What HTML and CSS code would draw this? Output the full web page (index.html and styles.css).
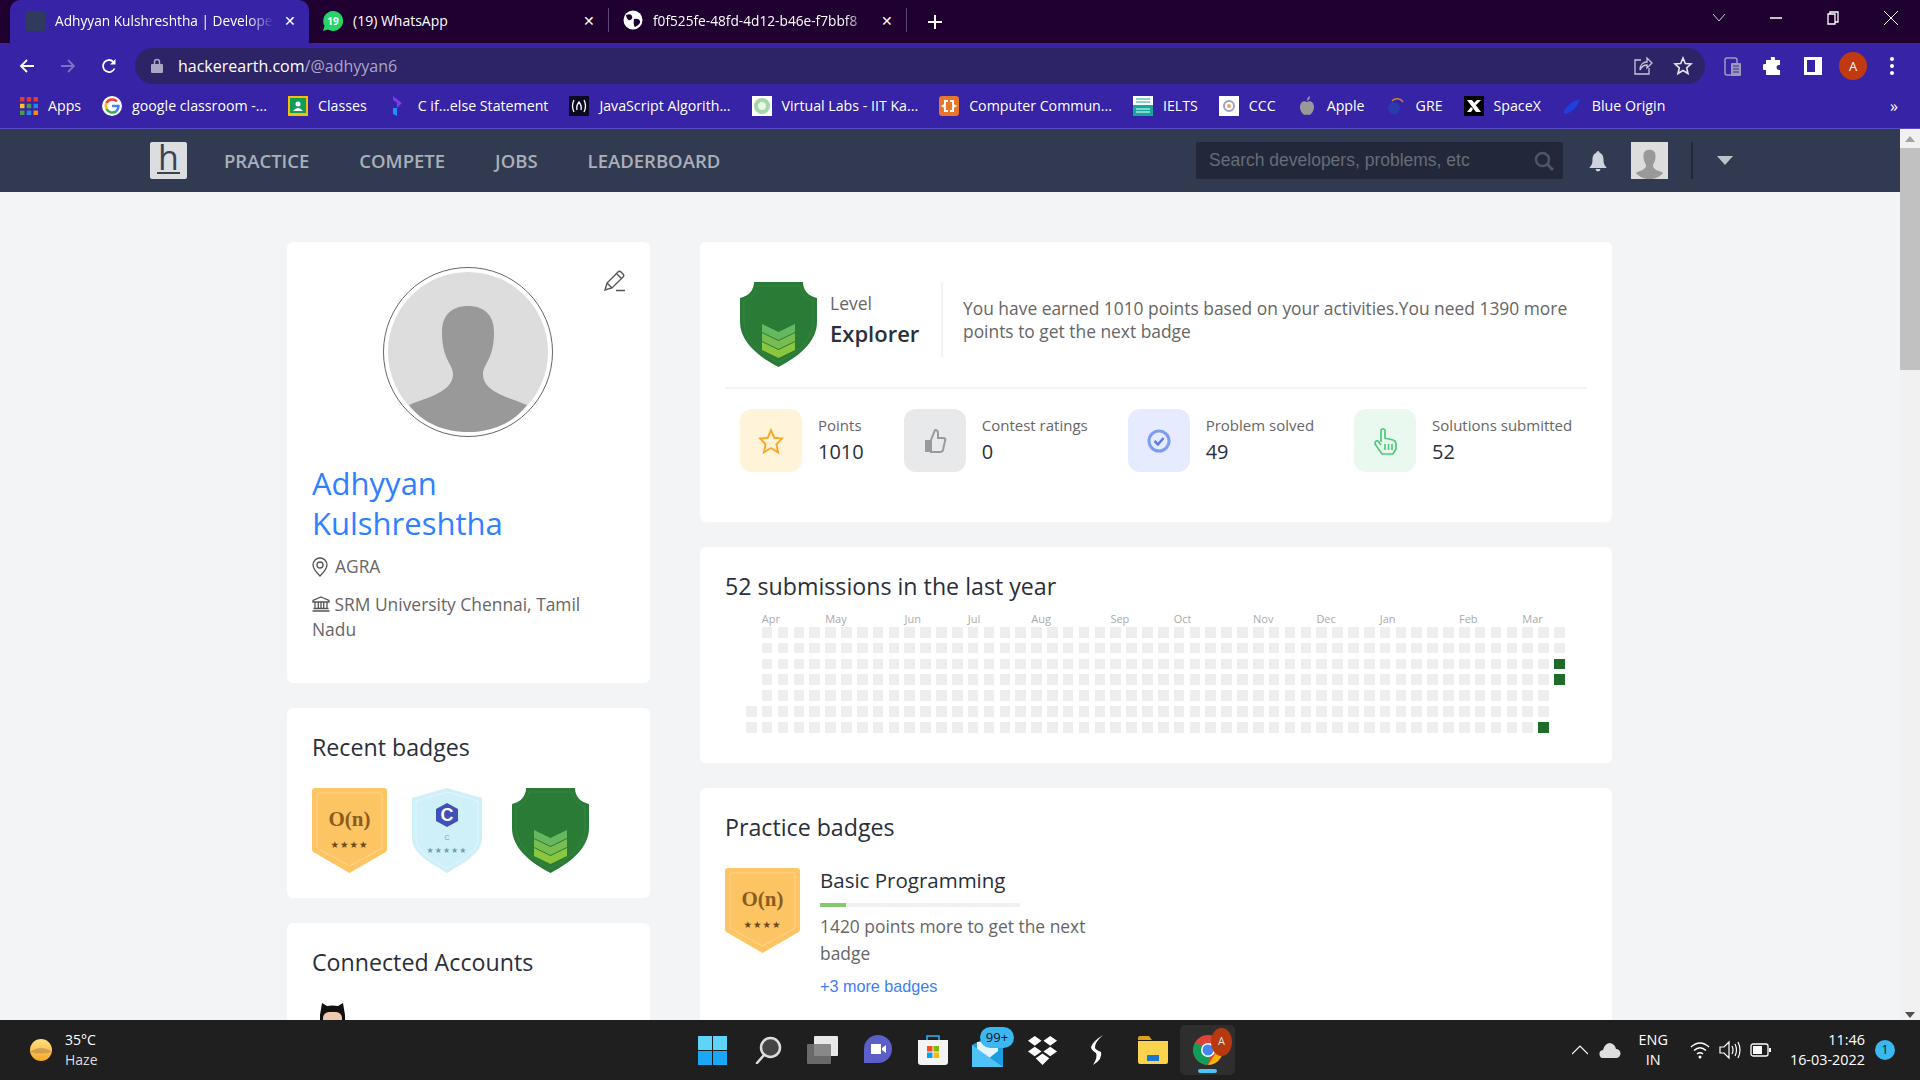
FILE: index.html
```html
<!DOCTYPE html>
<html lang="en">
<head>
    <meta charset="UTF-8">
    <title>Adhyyan Kulshreshtha | Developer Profile</title>
    <link rel="stylesheet" href="styles.css">
</head>
<body>
    <svg class="defs" width="0" height="0">
        <symbol id="person" viewBox="-80 -80 160 160">
            <path fill="#999" d="M-59 53C-40 45-15 40-15 22C-15 12-26 8-26-20C-26-38-15-46 0-46C15-46 26-38 26-20C26 8 15 12 15 22C15 40 40 45 59 53C45 72 22 80 0 80C-22 80-45 72-59 53Z"/>
        </symbol>
        <symbol id="shield" viewBox="0 0 77 85">
            <path fill="#2a7b35" d="M14 0H63C63 8 68 14 77 16V40C77 60 58 75 38.500 85C19 75 0 60 0 40V16C9 14 14 8 14 0Z"/>
            <path fill="none" stroke="#3a8a4a" stroke-width=".7" d="M17 4H60C61 11 66 17 73 19V40C73 58 56 72 38.500 80C21 72 4 58 4 40V19C11 17 16 11 17 4Z"/>
            <path fill="#66b860" d="M22 42L38.500 50L55 42V50L38.500 58L22 50Z"/>
            <path fill="#78bd52" d="M22 51L38.500 59L55 51V59L38.500 67L22 59Z"/>
            <path fill="#8cc63f" d="M22 60L38.500 68L55 60V68L38.500 76L22 68Z"/>
        </symbol>
        <symbol id="badge-on-shape" viewBox="0 0 75 85">
            <path fill="#fdc463" d="M3 0H72Q75 0 75 3V61Q75 64 72 65L37.500 85L3 65Q0 64 0 61V3Q0 0 3 0Z"/>
            <path fill="none" stroke="#ffd99a" stroke-width=".8" d="M7 5H68Q70 5 70 7V60L37.500 78L5 60V7Q5 5 7 5Z"/>
        </symbol>
    </svg>

    <div class="tabstrip">
        <div class="tab tab-active">
            <span class="tab-favicon"></span>
            <span class="tab-title tab-fade">Adhyyan Kulshreshtha | Develope</span>
            <span class="tab-close">✕</span>
        </div>
        <div class="tab">
            <svg class="tab-icon" viewBox="0 0 20 20"><path fill="#25d366" d="M10 0a10 10 0 0 0-8.500 15L0 20l5-1.400A10 10 0 1 0 10 0Z"/><text x="10" y="14" class="wa-text">19</text></svg>
            <span class="tab-title">(19) WhatsApp</span>
            <span class="tab-close">✕</span>
        </div>
        <div class="tab tab-sep">
            <svg class="tab-icon" viewBox="0 0 20 20"><circle cx="10" cy="10" r="9.500" fill="#fff"/><path fill="#1f0030" d="M3 5q5-2 6 1t-2 4-4-5ZM11 9q5-1 6 2t-5 6q-2-2-1-8Z"/></svg>
            <span class="tab-title tab-fade">f0f525fe-48fd-4d12-b46e-f7bbf8</span>
            <span class="tab-close">✕</span>
        </div>
        <div class="tab-plus">
            <svg viewBox="0 0 14 14" width="14" height="14"><path stroke="#fff" stroke-width="2" d="M7 0V14M0 7H14"/></svg>
        </div>
        <div class="window-btns">
            <svg viewBox="0 0 12 8" width="12" height="8"><path fill="none" stroke="#ccc" d="M0 0L6 7L12 0"/></svg>
            <svg viewBox="0 0 12 2" width="12" height="2"><path stroke="#fff" stroke-width="1.500" d="M0 1H12"/></svg>
            <svg viewBox="0 0 12 14" width="12" height="14"><path fill="none" stroke="#fff" stroke-width="1.300" d="M1 3H8V13H1ZM3 3V1H11V11H8"/></svg>
            <svg viewBox="0 0 14 14" width="14" height="14"><path stroke="#fff" d="M0 0L14 14M14 0L0 14"/></svg>
        </div>
    </div>

    <div class="toolbar">
        <div class="nav-arrows">
            <svg viewBox="0 0 16 16" width="16" height="16"><path fill="none" stroke="#fff" stroke-width="1.800" d="M15 8H2M8 2L2 8L8 14"/></svg>
            <svg viewBox="0 0 16 16" width="16" height="16"><path fill="none" stroke="#7c70c6" stroke-width="1.800" d="M1 8H14M8 2L14 8L8 14"/></svg>
            <svg viewBox="0 0 16 16" width="16" height="16"><path fill="none" stroke="#fff" stroke-width="1.800" d="M13.500 10.500A6 6 0 1 1 12.500 4"/><path fill="#fff" d="M14.500 1V6.500H9Z"/></svg>
        </div>
        <div class="omnibox">
            <svg class="lock" viewBox="0 0 12 15" width="12" height="15"><path fill="none" stroke="#a9a6c6" stroke-width="1.500" d="M3.500 6V4a2.500 2.500 0 0 1 5 0V6"/><rect y="6" width="12" height="9" rx="1" fill="#a9a6c6" x="0"/></svg>
            <span class="url">hackerearth.com<span class="url-path">/@adhyyan6</span></span>
            <div class="omni-actions">
                <svg viewBox="0 0 20 20" width="20" height="20"><path fill="none" stroke="#c8c6dc" stroke-width="1.300" d="M8 4H2V18H16V12M7 14C7 9 10 6 14 6V2L19 7L14 12V9C11 9 9 10 7 14Z"/></svg>
                <svg viewBox="0 0 20 20" width="20" height="20"><path fill="none" stroke="#e6e4f0" stroke-width="1.600" d="M10 2L12.300 7.500L18 8L13.700 11.800L15 17.500L10 14.500L5 17.500L6.300 11.800L2 8L7.700 7.500Z"/></svg>
            </div>
        </div>
        <div class="toolbar-ext">
            <svg viewBox="0 0 18 22" width="18" height="22"><rect x="1" y="3" width="12" height="17" rx="2" fill="none" stroke="#9e9ab8" stroke-width="1.500"/><rect x="7" y="8" width="10" height="13" rx="1" fill="#9e9ab8"/><path stroke="#3623a5" d="M9 11H15M9 14H15M9 17H15"/></svg>
            <svg viewBox="0 0 20 20" width="20" height="20"><path fill="#fff" d="M8 1h3a1.500 1.500 0 0 1 1 2v1h5v5h-1a2.500 2.500 0 0 0 0 5h1v5H3v-5H2a3 3 0 0 1 0-6h1V4h5V3Q7.500 1.500 8 1Z"/></svg>
            <svg viewBox="0 0 18 18" width="18" height="18"><rect width="18" height="18" fill="#fff"/><rect x="3" y="3" width="8" height="12" fill="#3623a5"/></svg>
            <span class="chrome-avatar">A</span>
            <svg class="chrome-menu" viewBox="0 0 4 18" width="4" height="18"><circle cx="2" cy="2" r="2" fill="#fff"/><circle cx="2" cy="9" r="2" fill="#fff"/><circle cx="2" cy="16" r="2" fill="#fff"/></svg>
        </div>
    </div>

    <div class="bookmarks">
        <div class="bm"><svg class="bm-icon bm-apps" viewBox="0 0 16 16"><path fill="#e53935" d="M0 0h4v4H0zM6 0h4v4H6zM12 0h4v4h-4z"/><path fill="#fbc02d" d="M0 6h4v4H0z"/><path fill="#43a047" d="M6 6h4v4H6zM0 12h4v4H0z"/><path fill="#1e88e5" d="M12 6h4v4h-4zM6 12h4v4H6z"/><path fill="#fb8c00" d="M12 12h4v4h-4z"/></svg>Apps</div>
        <div class="bm"><svg class="bm-icon" viewBox="0 0 20 20"><circle cx="10" cy="10" r="10" fill="#fff"/><path fill="none" stroke="#ea4335" stroke-width="2.500" d="M15 5.500A6.500 6.500 0 0 0 4.500 7"/><path fill="none" stroke="#fbbc05" stroke-width="2.500" d="M4.500 7a6.500 6.500 0 0 0 0 6"/><path fill="none" stroke="#34a853" stroke-width="2.500" d="M4.500 13a6.500 6.500 0 0 0 10 2"/><path fill="none" stroke="#4285f4" stroke-width="2.500" d="M14.500 15A6.500 6.500 0 0 0 16.500 10H10"/></svg>google classroom -...</div>
        <div class="bm"><svg class="bm-icon" viewBox="0 0 20 20"><rect width="20" height="20" fill="#fbbc04"/><rect x="2" y="2" width="16" height="15" fill="#0f9d58"/><circle cx="10" cy="8" r="2.500" fill="#fff"/><path fill="#fff" d="M5 15q5-6 10 0Z"/></svg>Classes</div>
        <div class="bm"><svg class="bm-icon" viewBox="0 0 20 20"><path fill="#7c3aed" d="M5 0L14 7L9 12V7L5 4Z"/><path fill="#1e90ff" d="M5 12L9 12V20L5 18Z"/></svg>C if...else Statement</div>
        <div class="bm"><svg class="bm-icon" viewBox="0 0 20 20"><rect width="20" height="20" fill="#0a0a23"/><path fill="none" stroke="#fff" stroke-width="1.300" d="M5 4Q2 10 5 16M15 4Q18 10 15 16M8 14Q7 10 10 6Q13 10 12 14"/></svg>JavaScript Algorith...</div>
        <div class="bm"><svg class="bm-icon" viewBox="0 0 20 20"><rect width="20" height="20" fill="#fff"/><circle cx="10" cy="10" r="8" fill="#a5d6a7"/><circle cx="10" cy="10" r="4" fill="#e8f5e9"/></svg>Virtual Labs - IIT Ka...</div>
        <div class="bm"><svg class="bm-icon" viewBox="0 0 20 20"><rect width="20" height="20" rx="3" fill="#e8762b"/><path fill="none" stroke="#fff" stroke-width="2" d="M9 5H6V9L4 10L6 11V15H9M11 5H14V9L16 10L14 11V15H11"/></svg>Computer Commun...</div>
        <div class="bm"><svg class="bm-icon" viewBox="0 0 20 20"><rect width="20" height="20" fill="#14a89c"/><rect width="20" height="9" fill="#fff"/><path stroke="#14a89c" d="M3 3H17M3 6H17"/><path stroke="#fff" d="M3 13H17M3 16H17"/></svg>IELTS</div>
        <div class="bm"><svg class="bm-icon" viewBox="0 0 20 20"><rect width="20" height="20" fill="#fff"/><circle cx="10" cy="10" r="5" fill="none" stroke="#a0a0c0" stroke-width="2"/><circle cx="10" cy="10" r="2" fill="#e0b050"/></svg>CCC</div>
        <div class="bm"><svg class="bm-icon" viewBox="0 0 20 20"><path fill="#999" d="M10 6C7 4 3 6 3 11C3 15 6 19 8 19Q10 18 12 19C14 19 17 15 17 11C17 6 13 4 10 6ZM10 5Q10 1 13 0Q13 4 10 5Z"/></svg>Apple</div>
        <div class="bm"><svg class="bm-icon" viewBox="0 0 20 20"><path fill="none" stroke="#d08030" stroke-width="1.500" d="M6 5A7 7 0 0 1 17 6"/><circle cx="8" cy="12" r="6" fill="#2a3caa"/></svg>GRE</div>
        <div class="bm"><svg class="bm-icon" viewBox="0 0 20 20"><rect width="20" height="20" fill="#000"/><path fill="#fff" d="M3 4H8L17 16H12ZM17 4L12 9L10 7L13 4ZM3 16L7 11L9 13L7 16Z"/></svg>SpaceX</div>
        <div class="bm"><svg class="bm-icon" viewBox="0 0 20 20"><path fill="#1e40e0" d="M1 17Q6 6 18 3Q15 14 4 18Z"/></svg>Blue Origin</div>
        <span class="bm-more">»</span>
    </div>

    <div class="viewport">
        <div class="page">
            <header class="site-nav">
                <div class="site-logo">
                    <span class="site-logo-h">h</span>
                </div>
                <nav class="site-links">
                    <a>PRACTICE</a>
                    <a>COMPETE</a>
                    <a>JOBS</a>
                    <a>LEADERBOARD</a>
                </nav>
                <div class="site-search">
                    <span>Search developers, problems, etc</span>
                    <svg viewBox="0 0 20 20" width="20" height="20"><circle cx="8.500" cy="8.500" r="6.500" fill="none" stroke="#4d5666" stroke-width="2.500"/><path stroke="#4d5666" stroke-width="3" d="M13 13L19 19"/></svg>
                </div>
                <svg class="site-bell" viewBox="0 0 18 22" width="18" height="22"><path fill="#cfd3dc" d="M9 1a1.500 1.500 0 0 1 1.500 1.500C14 4 14.500 7 14.500 10C14.500 14 16 16 17.500 17.500V18H.5V17.500C2 16 3.500 14 3.500 10C3.500 7 4 4 7.500 2.500A1.500 1.500 0 0 1 9 1Z"/><path fill="#cfd3dc" d="M6.500 19H11.500A2.500 2.500 0 0 1 6.500 19Z"/></svg>
                <svg class="site-avatar" viewBox="-80 -80 160 160"><rect x="-80" y="-80" width="160" height="160" fill="#ddd"/><use href="#person" x="-80" y="-80" width="160" height="160"/></svg>
                <span class="site-divider"></span>
                <span class="site-caret"></span>
            </header>

            <main class="content">
                <div class="col-left">
                    <section class="card profile-card">
                        <svg class="edit-icon" viewBox="0 0 22 22" width="22" height="22"><path fill="none" stroke="#555" stroke-width="1.400" d="M1 20L3 13L14 2Q15.500 .5 17 2L19 4Q20.500 5.500 19 7L8 18L1 20ZM3 13L8 18M12.500 3.500L17.500 8.500M12 20.500H21"/></svg>
                        <div class="avatar-ring">
                            <svg viewBox="-80 -80 160 160" class="avatar-img"><circle r="80" fill="#ddd"/><use href="#person" x="-80" y="-80" width="160" height="160"/></svg>
                        </div>
                        <h1 class="profile-name">Adhyyan Kulshreshtha</h1>
                        <div class="profile-line">
                            <svg viewBox="0 0 16 20" width="16" height="20"><path fill="none" stroke="#555" stroke-width="1.300" d="M8 1A7 7 0 0 0 1 8C1 12 5 16 8 19C11 16 15 12 15 8A7 7 0 0 0 8 1Z"/><circle cx="8" cy="8" r="3" fill="none" stroke="#555" stroke-width="1.300"/></svg>
                            AGRA
                        </div>
                        <div class="profile-school">
                            <svg viewBox="0 0 18 16" width="18" height="16"><path fill="none" stroke="#555" stroke-width="1.300" d="M9 1L17 4.500V6H1V4.500ZM3 6V12M6.300 6V12M9 6V12M11.700 6V12M15 6V12M1.500 12.500H16.500M.5 15H17.500"/></svg>
                            SRM University Chennai, Tamil Nadu
                        </div>
                    </section>

                    <section class="card">
                        <h2 class="card-title">Recent badges</h2>
                        <div class="badge-row">
                            <svg class="badge-on" viewBox="0 0 75 85">
                                <use href="#badge-on-shape"/>
                                <text x="37.500" y="38" class="on-text">O(n)</text>
                                <text x="37.500" y="60" class="on-stars">★★★★</text>
                            </svg>
                            <svg class="badge-c" viewBox="0 0 70 85">
                                <path fill="#d0f0f9" d="M35 0L70 10V50C70 66 50 76 35 85C20 76 0 66 0 50V10Z"/>
                                <path fill="none" stroke="#e6f8fd" stroke-width=".8" d="M35 4L66 13V50C66 64 48 73 35 80C22 73 4 64 4 50V13Z"/>
                                <path fill="#3f51b5" d="M35 15L46 21V33L35 39L24 33V21Z"/>
                                <text x="35" y="33" class="c-text">C</text>
                                <text x="35" y="52" class="c-small">C</text>
                                <text x="35" y="65" class="c-stars">★★★★★</text>
                            </svg>
                            <svg class="badge-shield"><use href="#shield"/></svg>
                        </div>
                    </section>

                    <section class="card">
                        <h2 class="card-title">Connected Accounts</h2>
                        <div class="badge-row">
                            <svg class="octocat" viewBox="0 0 25 30" width="25" height="30"><path fill="#111" d="M2 0L7 3Q12 2 18 3L23 0L25 12V30H0V12Z"/><rect x="3" y="9" width="19" height="18" rx="6" fill="#f0c8b0"/></svg>
                        </div>
                    </section>
                </div>

                <div class="col-right">
                    <section class="card level-card">
                        <div class="level-row">
                            <svg class="level-shield"><use href="#shield"/></svg>
                            <div class="level-name">
                                <span class="level-label">Level</span>
                                <span class="level-value">Explorer</span>
                            </div>
                            <p class="level-desc">You have earned 1010 points based on your activities.You need 1390 more points to get the next badge</p>
                        </div>
                        <div class="stat-row">
                            <div class="stat">
                                <div class="stat-box stat-yellow"><svg viewBox="0 0 24 24" width="26" height="26"><path fill="none" stroke="#f9a825" stroke-width="1.800" d="M12 2L15 9L22 9.800L17 15L18.500 22.500L12 18.500L5.500 22.500L7 15L2 9.800L9 9Z"/></svg></div>
                                <div><div class="stat-label">Points</div><div class="stat-value">1010</div></div>
                            </div>
                            <div class="stat">
                                <div class="stat-box stat-gray"><svg viewBox="0 0 24 26" width="24" height="26"><path fill="none" stroke="#9a9a9a" stroke-width="2" d="M8 12L12 2Q15 2 15 5V10H21Q23 11 22 13L20 22Q19.500 24 17 24H8Z"/><rect x="2" y="12" width="6" height="12" fill="#9a9a9a"/></svg></div>
                                <div><div class="stat-label">Contest ratings</div><div class="stat-value">0</div></div>
                            </div>
                            <div class="stat">
                                <div class="stat-box stat-blue"><svg viewBox="0 0 24 24" width="24" height="24"><circle cx="12" cy="12" r="10" fill="none" stroke="#7f9cf5" stroke-width="3"/><path fill="none" stroke="#5a7be8" stroke-width="2.500" d="M7.500 12L11 15.500L16.500 9"/></svg></div>
                                <div><div class="stat-label">Problem solved</div><div class="stat-value">49</div></div>
                            </div>
                            <div class="stat">
                                <div class="stat-box stat-green"><svg viewBox="0 0 24 28" width="24" height="28"><path fill="none" stroke="#4ccb78" stroke-width="1.700" d="M8 15V3Q10 .5 12 3V11L20 13Q23 14 23 17V22L20 27H9L2 17Q2 13 5 14L8 18M12 17V23M15.500 17V23M19 17V23"/></svg></div>
                                <div><div class="stat-label">Solutions submitted</div><div class="stat-value">52</div></div>
                            </div>
                        </div>
                    </section>

                    <section class="card">
                        <h2 class="card-title">52 submissions in the last year</h2>
                        <div class="cal-months" id="calMonths"></div>
                        <div class="cal-grid" id="calGrid"></div>
                    </section>

                    <section class="card practice-card">
                        <h2 class="card-title">Practice badges</h2>
                        <div class="practice-row">
                            <svg class="badge-on" viewBox="0 0 75 85">
                                <use href="#badge-on-shape"/>
                                <text x="37.500" y="38" class="on-text">O(n)</text>
                                <text x="37.500" y="60" class="on-stars">★★★★</text>
                            </svg>
                            <div class="practice-info">
                                <div class="practice-name">Basic Programming</div>
                                <div class="practice-bar"><div class="practice-fill"></div></div>
                                <p class="practice-text">1420 points more to get the next badge</p>
                                <a class="practice-more">+3 more badges</a>
                            </div>
                        </div>
                    </section>
                </div>
            </main>
        </div>
        <div class="scrollbar">
            <span class="scroll-up"></span>
            <div class="scroll-thumb"></div>
            <span class="scroll-down"></span>
        </div>
    </div>

    <footer class="taskbar">
        <div class="weather">
            <svg viewBox="0 0 24 24" width="24" height="24"><defs><linearGradient id="sun" x1="0" y1="0" x2="0" y2="1"><stop offset="0" stop-color="#ffe082"/><stop offset="1" stop-color="#f9a825"/></linearGradient></defs><circle cx="12" cy="12" r="11" fill="url(#sun)"/><path fill="#b08a50" opacity=".6" d="M1 14Q12 6 23 14Q12 17 1 14Z"/></svg>
            <div><div>35°C</div><div class="weather-sub">Haze</div></div>
        </div>
        <div class="task-icons">
            <span class="task-slot"><svg viewBox="0 0 29 29" width="29" height="29"><path fill="#5fd4fb" d="M0 0H14V14H0ZM15 0H29V14H15Z"/><path fill="#1aa7f5" d="M0 15H14V29H0ZM15 15H29V29H15Z"/></svg></span>
            <span class="task-slot"><svg viewBox="0 0 28 28" width="28" height="28"><circle cx="16.500" cy="11.500" r="9.500" fill="#444" stroke="#ddd" stroke-width="2.500"/><path stroke="#ddd" stroke-width="2.500" stroke-linecap="round" d="M10 19L3 27"/></svg></span>
            <span class="task-slot"><svg viewBox="0 0 32 28" width="32" height="28"><rect x="7" y="0" width="24" height="20" rx="1" fill="#e8e8e8"/><rect y="8" width="24" height="20" rx="1" fill="#777" opacity=".85"/></svg></span>
            <span class="task-slot"><svg viewBox="0 0 28 30" width="28" height="30"><path fill="#5b5fc7" d="M14 0A14 14 0 0 1 28 14A14 14 0 0 1 14 28H0V14A14 14 0 0 1 14 0Z"/><path fill="#fff" d="M7 9H17V19H7ZM18 13L22 10V18L18 15Z"/></svg></span>
            <span class="task-slot"><svg viewBox="0 0 30 30" width="30" height="30"><path fill="none" stroke="#29b6f6" stroke-width="1.500" d="M9 6V1H21V6"/><path fill="#f4f4f4" d="M0 5H30V27Q30 30 27 30H3Q0 30 0 27Z"/><path fill="#f25022" d="M9 11H14.500V16.500H9Z"/><path fill="#7fba00" d="M15.500 11H21V16.500H15.500Z"/><path fill="#00a4ef" d="M9 17.500H14.500V23H9Z"/><path fill="#ffb900" d="M15.500 17.500H21V23H15.500Z"/></svg></span>
            <span class="task-slot task-mail">
                <svg viewBox="0 0 31 30" width="31" height="30"><path fill="#1b9de2" d="M0 8L15 0L31 8V30H0Z"/><path fill="#e6f4fb" d="M5 5H26V14L16 22L5 14Z"/><path fill="#4fc3f7" d="M0 8L31 30H0Z"/></svg>
                <span class="mail-count">99+</span>
            </span>
            <span class="task-slot"><svg viewBox="0 0 32 32" width="31" height="31"><path fill="#fff" d="M8 1L15 6L8 11L1 6ZM24 1L31 6L24 11L17 6ZM8 12L15 17L8 22L1 17ZM24 12L31 17L24 22L17 17ZM16 19L23 24L16 31L9 24Z"/></svg></span>
            <span class="task-slot"><svg viewBox="0 0 14 30" width="14" height="30"><path fill="#fff" d="M12 0Q3 8 4 13Q5 15 10 17Q12 24 2 30Q7 22 5 18Q0 15 0 12Q2 6 12 0Z"/></svg></span>
            <span class="task-slot"><svg viewBox="0 0 30 28" width="30" height="28"><path fill="#dca11c" d="M0 2Q0 0 2 0H11L14 4H0Z"/><path fill="#fcd34d" d="M0 5H30V26Q30 28 28 28H2Q0 28 0 26Z"/><path fill="#1976d2" d="M9 19H21V25H9Z"/></svg></span>
            <span class="task-slot task-active">
                <svg viewBox="0 0 30 30" width="30" height="30"><circle cx="15" cy="15" r="15" fill="#db4437"/><path fill="#0f9d58" d="M2 8A15 15 0 0 0 15 30L18 14Z"/><path fill="#f4b400" d="M15 30A15 15 0 0 0 28 8H15L22 19Z"/><circle cx="15" cy="15" r="7" fill="#fff"/><circle cx="15" cy="15" r="5.500" fill="#4285f4"/></svg>
                <span class="task-avatar">A</span>
                <span class="task-line"></span>
            </span>
        </div>
        <div class="tray">
            <svg viewBox="0 0 16 10" width="16" height="10"><path fill="none" stroke="#fff" stroke-width="1.200" d="M0 9L8 1L16 9"/></svg>
            <svg viewBox="0 0 22 16" width="22" height="16"><path fill="#ddd" d="M5 16A4 4 0 0 1 4 8Q6 1 11 1Q16 2 17 7A4.500 4.500 0 0 1 17 16Z"/></svg>
            <div class="tray-lang"><div>ENG</div><div>IN</div></div>
            <div class="tray-status">
                <svg viewBox="0 0 20 18" width="20" height="18"><path fill="none" stroke="#fff" stroke-width="1.500" d="M1 6Q10-2 19 6M4 9.500Q10 4 16 9.500M7 13Q10 10.500 13 13"/><circle cx="10" cy="16" r="1.500" fill="#fff"/></svg>
                <svg viewBox="0 0 22 20" width="22" height="20"><path fill="none" stroke="#fff" stroke-width="1.200" d="M1 7H5L10 2V18L5 13H1ZM13 6Q15 10 13 14M16 4Q19 10 16 16M19 2Q23 10 19 18"/></svg>
                <svg viewBox="0 0 21 14" width="21" height="14"><rect x="1" y="1" width="17" height="12" rx="2" fill="none" stroke="#fff" stroke-width="1.300"/><rect x="3" y="3" width="9" height="8" fill="#fff"/><rect x="19" y="5" width="2" height="4" fill="#fff"/></svg>
            </div>
            <div class="tray-clock"><div>11:46</div><div>16-03-2022</div></div>
            <span class="tray-count">1</span>
        </div>
    </footer>

    <script>
        var months = [['Apr', 1], ['May', 5], ['Jun', 10], ['Jul', 14], ['Aug', 18], ['Sep', 23], ['Oct', 27], ['Nov', 32], ['Dec', 36], ['Jan', 40], ['Feb', 45], ['Mar', 49]];
        var monthRow = document.getElementById('calMonths');
        months.forEach(function (m) {
            var label = document.createElement('span');
            label.textContent = m[0];
            label.style.gridColumn = (m[1] + 1) + ' / span 3';
            monthRow.appendChild(label);
        });

        var active = { '50-6': true, '51-2': true, '51-3': true };
        var grid = document.getElementById('calGrid');
        for (var col = 0; col < 52; col++) {
            for (var row = 0; row < 7; row++) {
                var cell = document.createElement('i');
                var hidden = (col === 0 && row < 5) || (col === 51 && row > 3);
                cell.className = hidden ? 'cell-empty' : (active[col + '-' + row] ? 'cell-on' : '');
                grid.appendChild(cell);
            }
        }
    </script>
</body>
</html>
```

FILE: styles.css
```css
* { box-sizing: border-box; }
body {
    margin: 0;
    height: 1080px;
    display: flex;
    flex-direction: column;
    overflow: hidden;
    font-family: "Open Sans", sans-serif;
    background: #f3f4f6;
}
h1, h2, p { margin: 0; }
.defs { position: absolute; }

/* browser chrome */
.tabstrip {
    height: 43px;
    background: #1f0030;
    display: flex;
    align-items: flex-end;
    padding-left: 10px;
    color: #fff;
    font-size: 14px;
}
.tab {
    width: 299px;
    height: 43px;
    display: flex;
    align-items: center;
    padding: 0 13px 2px 14px;
    gap: 10px;
}
.tab-active {
    background: #3623a5;
    border-radius: 10px 10px 0 0;
    padding-left: 15px;
}
.tab-sep { border-left: 1px solid #5a4a70; border-right: 1px solid #5a4a70; height: 24px; padding-bottom: 0; margin-bottom: 11px; }
.tab-favicon { width: 20px; height: 20px; background: #2f3a5c; border-radius: 2px; flex: none; }
.tab-icon { width: 20px; height: 20px; flex: none; }
.wa-text { font-size: 10px; font-weight: 700; fill: #fff; text-anchor: middle; }
.tab-title { flex: 1; white-space: nowrap; }
.tab-fade {
    font-size: 13.700px;
    -webkit-mask-image: linear-gradient(to right, #000 88%, transparent 100%);
    mask-image: linear-gradient(to right, #000 88%, transparent 100%);
}
.tab-close { font-size: 14px; flex: none; }
.tab-plus { width: 56px; height: 43px; display: flex; align-items: center; justify-content: center; }
.window-btns {
    margin-left: auto;
    display: flex;
    align-items: center;
    gap: 45px;
    height: 38px;
    margin-bottom: 6px;
    padding-right: 22px;
}

.toolbar {
    height: 45px;
    background: #3623a5;
    display: flex;
    align-items: center;
    padding-left: 19px;
    color: #fff;
}
.nav-arrows { display: flex; gap: 25px; width: 116px; }
.omnibox {
    width: 1570px;
    height: 36px;
    background: #2d2468;
    border-radius: 18px;
    display: flex;
    align-items: center;
    padding: 0 12px 0 16px;
}
.lock { margin-right: 15px; }
.url { font-size: 16px; flex: 1; }
.url-path { color: #a9a6c6; }
.omni-actions { display: flex; gap: 20px; align-items: center; }
.toolbar-ext { display: flex; align-items: center; gap: 21px; margin-left: 19px; }
.chrome-menu { margin-left: 6px; }
.chrome-avatar {
    width: 28px;
    height: 28px;
    border-radius: 50%;
    background: #c0390f;
    font-size: 13px;
    display: flex;
    align-items: center;
    justify-content: center;
    margin: 0 -4px;
}

.bookmarks {
    height: 41px;
    background: #3623a5;
    border-bottom: 1px solid #5a4cc0;
    display: flex;
    align-items: center;
    padding: 0 0 5px 20px;
    gap: 21px;
    color: #fff;
    font-size: 14.200px;
}
.bm { display: flex; align-items: center; gap: 10px; white-space: nowrap; }
.bm-icon { width: 20px; height: 20px; flex: none; }
.bm-apps { width: 18px; height: 18px; }
.bm-more { margin-left: auto; padding-right: 22px; font-size: 16px; }

/* page */
.viewport { flex: 1; min-height: 0; display: flex; }
.page { flex: 1; overflow: hidden; }
.scrollbar {
    width: 20px;
    background: #f1f1f1;
    display: flex;
    flex-direction: column;
    align-items: center;
}
.scroll-up, .scroll-down { width: 0; height: 0; border-left: 5px solid transparent; border-right: 5px solid transparent; }
.scroll-up { border-bottom: 6px solid #a3a3a3; margin: 7px 0 6px; }
.scroll-thumb { width: 100%; height: 222px; background: #c1c1c1; }
.scroll-down { border-top: 6px solid #505050; margin-top: auto; margin-bottom: 2px; }

.site-nav {
    height: 63px;
    background: #323a52;
    display: flex;
    align-items: center;
    padding-left: 150px;
}
.site-logo {
    width: 37px;
    height: 37px;
    background: #dcdde0;
    border-radius: 2px;
    display: flex;
    justify-content: center;
}
.site-logo-h {
    font-size: 34px;
    line-height: 31px;
    color: #3a4256;
    border-bottom: 2px solid #3a4256;
    height: 32px;
    padding: 0 1px;
    font-weight: 500;
}
.site-links { display: flex; gap: 50px; margin-left: 37px; margin-top: -1px; }
.site-links a { color: #aab0ba; font-size: 18.500px; font-weight: 600; }
.site-search {
    margin-left: auto;
    width: 367px;
    height: 37px;
    background: #22283a;
    border-radius: 2px;
    display: flex;
    align-items: center;
    justify-content: space-between;
    padding: 0 9px 0 13px;
    color: #666c78;
    font-family: "Liberation Sans", sans-serif;
    font-size: 17.500px;
}
.site-bell { margin-left: 26px; }
.site-avatar { width: 37px; height: 37px; margin-left: 24px; }
.site-divider { width: 2px; height: 37px; background: #22283a; margin-left: 23px; }
.site-caret {
    width: 0;
    height: 0;
    border-left: 8px solid transparent;
    border-right: 8px solid transparent;
    border-top: 9px solid #bcc2cc;
    margin-left: 24px;
    margin-right: 167px;
}

.content { display: flex; gap: 50px; padding: 50px 0 0 287px; }
.col-left { width: 363px; display: flex; flex-direction: column; gap: 25px; flex: none; }
.col-right { width: 912px; display: flex; flex-direction: column; gap: 25px; flex: none; }
.card {
    background: #fff;
    border-radius: 6px;
    padding: 25px;
    position: relative;
}
.card-title {
    font-size: 23.200px;
    line-height: 30px;
    font-weight: 500;
    color: #2a2f3a;
    margin-top: -1px;
}

.profile-card { height: 441px; }
.edit-icon { position: absolute; top: 28px; left: 317px; }
.avatar-ring {
    width: 170px;
    height: 170px;
    margin: 0 0 26px 71px;
    border: 1.500px solid #666;
    border-radius: 50%;
    padding: 3.500px;
}
.avatar-img { display: block; width: 160px; height: 160px; }
.profile-name {
    font-size: 31px;
    line-height: 40px;
    font-weight: 500;
    color: #2f80ff;
}
.profile-line, .profile-school {
    font-size: 17.400px;
    line-height: 25px;
    color: #666;
}
.profile-line { margin-top: 11px; display: flex; align-items: center; gap: 7px; }
.profile-school { margin-top: 13px; }
.profile-school svg { vertical-align: -1px; }

.badge-row { display: flex; gap: 25px; margin-top: 26px; }
.badge-on { width: 75px; height: 85px; display: block; flex: none; }
.badge-c { width: 70px; height: 85px; display: block; flex: none; }
.badge-shield { width: 77px; height: 85px; display: block; margin-left: 5px; }
.on-text { font-family: "Liberation Serif", serif; font-weight: 700; font-size: 21px; fill: #8a5c1e; text-anchor: middle; }
.on-stars { font-family: "DejaVu Sans", sans-serif; font-size: 9.500px; letter-spacing: 1px; fill: #6b4a1c; text-anchor: middle; }
.c-text { font-family: "Liberation Sans", sans-serif; font-weight: 700; font-size: 18px; fill: #fff; text-anchor: middle; }
.c-small { font-family: "Liberation Sans", sans-serif; font-size: 7px; fill: #7aa0ac; text-anchor: middle; }
.c-stars { font-family: "DejaVu Sans", sans-serif; font-size: 8px; letter-spacing: 1px; fill: #6fa0ac; text-anchor: middle; }
.octocat { display: block; margin-left: 8px; }

.level-card { height: 280px; padding-top: 40px; }
.level-row {
    display: flex;
    padding: 0 0 20px 15px;
    border-bottom: 2px solid #f3f4f6;
    height: 107px;
}
.level-shield { width: 77px; height: 85px; display: block; flex: none; }
.level-name {
    display: flex;
    flex-direction: column;
    width: 113px;
    margin-left: 13px;
    height: 75px;
    border-right: 2px solid #f3f4f6;
    flex: none;
}
.level-label { font-size: 17.500px; line-height: 22px; margin-top: 10px; color: #666; }
.level-value { font-size: 22px; line-height: 30px; margin-top: 4px; font-weight: 600; color: #2a2f3a; }
.level-desc {
    font-size: 17.400px;
    line-height: 23px;
    color: #666;
    margin: 15px 0 0 20px;
}
.stat-row { display: flex; gap: 40px; padding-left: 15px; margin-top: 20px; }
.stat { display: flex; gap: 16px; }
.stat-box {
    width: 62px;
    height: 63px;
    border-radius: 12px;
    display: flex;
    align-items: center;
    justify-content: center;
}
.stat-yellow { background: #fff4d9; }
.stat-gray { background: #e8e9eb; }
.stat-blue { background: #e6ebff; }
.stat-green { background: #e9f9ef; }
.stat-label { font-size: 15px; line-height: 20px; color: #666; margin-top: 6px; }
.stat-value { font-size: 20px; line-height: 27px; font-weight: 500; color: #2a2f3a; margin-top: 3px; }

.cal-months, .cal-grid {
    display: grid;
    grid-template-columns: repeat(52, 10.600px);
    column-gap: 5.260px;
    margin-left: 21px;
}
.cal-months {
    margin-top: 9px;
    height: 18px;
    font-size: 11px;
    line-height: 18px;
    color: #aaa;
}
.cal-grid {
    grid-template-rows: repeat(7, 10.600px);
    row-gap: 5.240px;
    grid-auto-flow: column;
    margin-bottom: 5px;
    margin-top: -1px;
}
.cal-grid i { background: #eee; }
.cal-grid .cell-on { background: #1e6b2c; }
.cal-grid .cell-empty { background: none; }

.practice-card { height: 300px; }
.practice-row { display: flex; gap: 20px; margin-top: 26px; }
.practice-info { width: 280px; }
.practice-name { font-size: 20.500px; line-height: 26px; font-weight: 500; color: #2a2f3a; margin-top: -1px; }
.practice-bar { width: 200px; height: 4px; background: #f0f1f4; margin-top: 10px; }
.practice-fill { width: 26px; height: 4px; background: #82c96a; }
.practice-text { font-size: 17.400px; line-height: 27px; color: #666; margin-top: 6px; }
.practice-more {
    display: block;
    font-family: "Liberation Sans", sans-serif;
    font-size: 16.200px;
    color: #3d80f5;
    margin-top: 10px;
}

/* windows taskbar */
.taskbar {
    height: 60px;
    flex: none;
    background: #1f1f1f;
    display: grid;
    grid-template-columns: 1fr auto 1fr;
    align-items: center;
    color: #fff;
    font-size: 14px;
}
.weather { display: flex; align-items: center; gap: 12px; padding-left: 29px; line-height: 20px; }
.weather-sub { color: #ddd; }
.task-icons { display: flex; }
.task-slot {
    width: 55px;
    height: 50px;
    display: flex;
    align-items: center;
    justify-content: center;
    position: relative;
    border-radius: 5px;
}
.task-mail svg { margin-top: 4px; }
.mail-count {
    position: absolute;
    top: 2px;
    left: 20px;
    width: 34px;
    height: 21px;
    border-radius: 11px;
    background: #39b8f2;
    color: #111;
    font-size: 13px;
    line-height: 21px;
    text-align: center;
}
.task-active { background: #2e2e2e; }
.task-avatar {
    position: absolute;
    top: 3px;
    right: 3px;
    width: 21px;
    height: 28px;
    border-radius: 50%;
    background: #b8380f;
    font-size: 11px;
    line-height: 26px;
    text-align: center;
    color: #ddd;
}
.task-line {
    position: absolute;
    bottom: 2px;
    left: 18px;
    width: 19px;
    height: 4px;
    border-radius: 2px;
    background: #4fc3f7;
}
.tray { display: flex; align-items: center; justify-content: flex-end; padding-right: 25px; font-size: 14.400px; }
.tray-lang { text-align: center; line-height: 20px; margin-left: 18px; }
.tray > svg:first-child { margin-right: 11px; }
.tray-status { display: flex; align-items: center; gap: 9px; margin-left: 22px; }
.tray-clock { text-align: right; line-height: 20px; margin-left: 19px; }
.tray-count {
    width: 20px;
    height: 20px;
    border-radius: 50%;
    background: #39b8f2;
    color: #111;
    font-size: 12px;
    line-height: 20px;
    text-align: center;
    margin-left: 10px;
}
```
